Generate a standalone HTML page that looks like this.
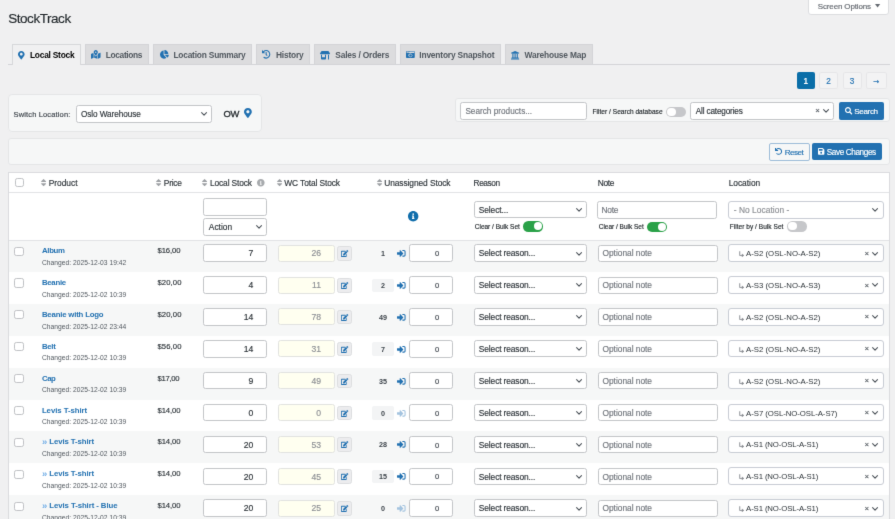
<!DOCTYPE html>
<html lang="en"><head><meta charset="utf-8"><title>StockTrack</title><style>
html,body{margin:0;padding:0;background:#f0f0f1;}
#p{will-change:transform;filter:url(#soft);position:relative;width:895px;height:519px;overflow:hidden;font-family:"Liberation Sans", Arial, sans-serif;}
#p .b{position:absolute;box-sizing:border-box;}
#p .t{position:absolute;white-space:nowrap;}
#p .n{-webkit-text-stroke:0.15px currentColor;}
#p .i{position:absolute;overflow:visible;}
</style></head><body><svg width="0" height="0" style="position:absolute"><filter id="soft" x="0" y="0" width="100%" height="100%" color-interpolation-filters="sRGB"><feConvolveMatrix order="3" kernelMatrix="1 9 1 9 81 9 1 9 1" edgeMode="duplicate" preserveAlpha="false"/></filter></svg><div id="p">
<span class="t n" style="top:12.00px;font-size:13.5px;line-height:13.5px;color:#1d2327;font-weight:400;letter-spacing:-0.447px;left:8.20px;">StockTrack</span>
<div class="b" style="left:808.40px;top:-1.00px;width:80.80px;height:16.30px;background:#fff;border:1px solid #dcdde0;border-radius:0 0 3px 3px;"></div>
<span class="t n" style="top:3.00px;font-size:8px;line-height:8px;color:#646970;font-weight:400;letter-spacing:-0.150px;left:817.80px;">Screen Options</span>
<svg class="i" style="left:875.00px;top:4.30px" width="5.20" height="3.60" viewBox="0 0 10 7" preserveAspectRatio="none" ><path fill="#646970" d="M0 0h10L5 7z"/></svg>
<div class="b" style="left:8.00px;top:64.00px;width:882.00px;height:1.00px;background:#d3d4d7;"></div>
<div class="b" style="left:12.25px;top:44.00px;width:68.35px;height:21.00px;background:#f0f0f1;border:1px solid #d6d7da;border-bottom:none;"></div>
<svg class="i" style="left:18.40px;top:50.75px" width="6.60" height="8.40" viewBox="0 0 384 512" preserveAspectRatio="none" ><path fill="#2271b1" d="M172.268 501.670C26.970 291.031 0 269.413 0 192 0 85.961 85.961 0 192 0s192 85.961 192 192c0 77.413-26.970 99.031-172.268 309.670-9.535 13.774-29.930 13.773-39.464 0zM192 272c44.183 0 80-35.817 80-80s-35.817-80-80-80-80 35.817-80 80 35.817 80 80 80z"/></svg>
<span class="t" style="top:51.00px;font-size:8.4px;line-height:8.4px;color:#000;font-weight:700;letter-spacing:-0.242px;left:30.00px;">Local Stock</span>
<div class="b" style="left:84.50px;top:44.00px;width:64.50px;height:20.00px;background:#dcdcde;border:1px solid #d3d4d7;border-bottom:none;"></div>
<svg class="i" style="left:90.75px;top:49.90px" width="9.55" height="8.80" viewBox="0 0 576 512" preserveAspectRatio="none" ><path fill="#2271b1" d="M288 0c-69.590 0-126 56.410-126 126 0 56.260 82.350 158.800 113.900 196.020 6.390 7.540 17.820 7.540 24.200 0C331.650 284.800 414 182.260 414 126 414 56.410 357.590 0 288 0zm0 168c-23.200 0-42-18.800-42-42s18.800-42 42-42 42 18.800 42 42-18.800 42-42 42zM20.120 215.950A32.006 32.006 0 0 0 0 245.660v250.320c0 11.320 11.430 19.060 21.940 14.860L160 448V214.920c-8.840-15.980-16.070-31.540-21.250-46.420L20.120 215.950zM288 359.670c-14.070 0-27.380-6.180-36.510-16.960-19.660-23.200-40.570-49.620-59.490-76.720v182l192 64V266c-18.920 27.090-39.820 53.520-59.490 76.720-9.130 10.770-22.440 16.950-36.510 16.950zm266.060-198.510L416 224v288l139.880-55.950A31.996 31.996 0 0 0 576 426.340V176.020c0-11.320-11.430-19.060-21.940-14.860z"/></svg>
<span class="t" style="top:51.00px;font-size:8.4px;line-height:8.4px;color:#50575e;font-weight:700;letter-spacing:-0.351px;left:105.75px;">Locations</span>
<div class="b" style="left:153.00px;top:44.00px;width:98.75px;height:20.00px;background:#dcdcde;border:1px solid #d3d4d7;border-bottom:none;"></div>
<svg class="i" style="left:159.50px;top:50.25px" width="8.80" height="8.65" viewBox="0 0 544 512" preserveAspectRatio="none" ><path fill="#2271b1" d="M527.79 288H290.5l158.03 158.03c6.040 6.040 15.980 6.530 22.190.680 38.700-36.460 65.320-85.610 73.130-140.860 1.340-9.460-6.510-17.850-16.060-17.850zm-15.830-64.800C503.720 103.740 408.260 8.280 288.800.040 279.680-.590 272 7.100 272 16.240V240h223.770c9.140 0 16.820-7.680 16.190-16.800zM224 288V50.710c0-9.550-8.390-17.400-17.840-16.060C86.990 51.490-4.100 155.600.140 280.370 4.500 408.510 114.830 513.590 243.030 511.980c50.400-.630 96.970-16.870 135.260-44.030 7.900-5.600 8.420-17.230 1.570-24.080L224 288z"/></svg>
<span class="t" style="top:51.00px;font-size:8.4px;line-height:8.4px;color:#50575e;font-weight:700;letter-spacing:-0.207px;left:173.40px;">Location Summary</span>
<div class="b" style="left:256.10px;top:44.00px;width:53.65px;height:20.00px;background:#dcdcde;border:1px solid #d3d4d7;border-bottom:none;"></div>
<svg class="i" style="left:261.80px;top:50.20px" width="8.30" height="8.70" viewBox="8 8 496 496" preserveAspectRatio="none" ><path fill="#2271b1" d="M504 255.531c.253 136.640-111.180 248.372-247.820 248.468-59.015.042-113.223-20.530-155.822-54.911-11.077-8.940-11.905-25.541-1.839-35.607l11.267-11.267c8.609-8.609 22.353-9.551 31.891-1.984C173.062 425.135 212.781 440 256 440c101.705 0 184-82.311 184-184 0-101.705-82.311-184-184-184-48.814 0-93.149 18.969-126.068 49.932l50.754 50.754c10.080 10.080 2.941 27.314-11.313 27.314H24c-8.837 0-16-7.163-16-16V38.627c0-14.254 17.234-21.393 27.314-11.314l49.372 49.372C129.209 34.136 189.552 8 256 8c136.810 0 247.747 110.780 248 247.531zm-180.912 78.784l9.823-12.630c8.138-10.463 6.253-25.542-4.210-33.679L288 256.349V152c0-13.255-10.745-24-24-24h-16c-13.255 0-24 10.745-24 24v135.651l65.409 50.874c10.463 8.137 25.541 6.253 33.679-4.210z"/></svg>
<span class="t" style="top:51.00px;font-size:8.4px;line-height:8.4px;color:#50575e;font-weight:700;letter-spacing:-0.162px;left:275.90px;">History</span>
<div class="b" style="left:313.75px;top:44.00px;width:81.75px;height:20.00px;background:#dcdcde;border:1px solid #d3d4d7;border-bottom:none;"></div>
<svg class="i" style="left:319.90px;top:50.50px" width="10.00" height="8.40" viewBox="0 0 640 512" preserveAspectRatio="none" ><path fill="#2271b1" d="M320 384H128V224H64v256c0 17.700 14.300 32 32 32h256c17.700 0 32-14.300 32-32V224h-64v160zm314.600-241.800l-85.300-128c-6-8.900-16-14.200-26.700-14.200H117.400c-10.700 0-20.700 5.300-26.600 14.200l-85.300 128c-14.200 21.300 1 49.800 26.600 49.800H608c25.500 0 40.700-28.500 26.600-49.800zM512 496c0 8.800 7.200 16 16 16h32c8.800 0 16-7.200 16-16V224h-64v272z"/></svg>
<span class="t" style="top:51.00px;font-size:8.4px;line-height:8.4px;color:#50575e;font-weight:700;letter-spacing:-0.179px;left:335.30px;">Sales / Orders</span>
<div class="b" style="left:399.50px;top:44.00px;width:101.25px;height:20.00px;background:#dcdcde;border:1px solid #d3d4d7;border-bottom:none;"></div>
<svg class="i" style="left:405.55px;top:51.00px" width="8.75" height="7.10" viewBox="0 32 512 448" preserveAspectRatio="none" ><path fill="#2271b1" d="M48 32C21.500 32 0 53.500 0 80v352c0 26.500 21.500 48 48 48h416c26.500 0 48-21.500 48-48V80c0-26.500-21.500-48-48-48H48zm0 32h106c3.300 0 6 2.700 6 6v20c0 3.300-2.700 6-6 6H38c-3.300 0-6-2.700-6-6V80c0-8.800 7.200-16 16-16zm426 96H38c-3.300 0-6-2.700-6-6v-36c0-3.300 2.700-6 6-6h138l30.200-45.300c1.100-1.700 3-2.700 5-2.700H464c8.800 0 16 7.200 16 16v74c0 3.300-2.700 6-6 6zM256 424c-66.200 0-120-53.800-120-120s53.800-120 120-120 120 53.800 120 120-53.800 120-120 120zm0-208c-48.500 0-88 39.500-88 88s39.500 88 88 88 88-39.500 88-88-39.500-88-88-88zm-48 104c-8.800 0-16-7.200-16-16 0-35.300 28.700-64 64-64 8.800 0 16 7.200 16 16s-7.200 16-16 16c-17.600 0-32 14.400-32 32 0 8.800-7.200 16-16 16z"/></svg>
<span class="t" style="top:51.00px;font-size:8.4px;line-height:8.4px;color:#50575e;font-weight:700;letter-spacing:-0.176px;left:419.30px;">Inventory Snapshot</span>
<div class="b" style="left:505.00px;top:44.00px;width:87.50px;height:20.00px;background:#dcdcde;border:1px solid #d3d4d7;border-bottom:none;"></div>
<svg class="i" style="left:510.90px;top:50.50px" width="8.20" height="8.40" viewBox="16 32 480 448" preserveAspectRatio="none" ><path fill="#2271b1" d="M496 128v16a8 8 0 0 1-8 8h-24v12c0 6.627-5.373 12-12 12H60c-6.627 0-12-5.373-12-12v-12H24a8 8 0 0 1-8-8v-16a8 8 0 0 1 4.941-7.392l232-88a7.996 7.996 0 0 1 6.118 0l232 88A8 8 0 0 1 496 128zm-24 304H40c-13.255 0-24 10.745-24 24v16a8 8 0 0 0 8 8h464a8 8 0 0 0 8-8v-16c0-13.255-10.745-24-24-24zM96 192v192H60c-6.627 0-12 5.373-12 12v20h416v-20c0-6.627-5.373-12-12-12h-36V192h-64v192h-64V192h-64v192h-64V192H96z"/></svg>
<span class="t" style="top:51.00px;font-size:8.4px;line-height:8.4px;color:#50575e;font-weight:700;letter-spacing:-0.185px;left:524.60px;">Warehouse Map</span>
<div class="b" style="left:796.75px;top:72.10px;width:18.25px;height:16.70px;background:#0a6ea8;border-radius:2px;"></div>
<span class="t" style="top:78.00px;font-size:8.2px;line-height:8.2px;color:#fff;font-weight:700;left:805.88px;transform:translateX(-50%);">1</span>
<div class="b" style="left:819.25px;top:72.10px;width:18.75px;height:16.70px;background:#f3f3f4;border:1px solid #e6e6e8;border-radius:2px;"></div>
<span class="t n" style="top:78.00px;font-size:8.2px;line-height:8.2px;color:#2271b1;font-weight:400;left:828.62px;transform:translateX(-50%);">2</span>
<div class="b" style="left:842.50px;top:72.10px;width:19.00px;height:16.70px;background:#f3f3f4;border:1px solid #e6e6e8;border-radius:2px;"></div>
<span class="t n" style="top:78.00px;font-size:8.2px;line-height:8.2px;color:#2271b1;font-weight:400;left:852.00px;transform:translateX(-50%);">3</span>
<div class="b" style="left:866.00px;top:72.10px;width:20.50px;height:16.70px;background:#f3f3f4;border:1px solid #e6e6e8;border-radius:2px;"></div>
<span class="t" style="top:78.00px;font-size:7.5px;line-height:7.5px;color:#2271b1;font-weight:700;left:876.25px;transform:translateX(-50%);font-family:&quot;DejaVu Sans&quot;,sans-serif;">→</span>
<div class="b" style="left:8.00px;top:94.40px;width:254.40px;height:38.10px;background:#f6f7f7;border:1px solid #e4e5e7;border-radius:4px;"></div>
<span class="t n" style="top:111.00px;font-size:7.5px;line-height:7.5px;color:#3c434a;font-weight:400;letter-spacing:0.145px;left:13.50px;">Switch Location:</span>
<div class="b" style="left:76.00px;top:105.25px;width:136.30px;height:17.40px;background:#fff;border:1px solid #c3c5c8;border-radius:2.5px;"></div>
<span class="t n" style="top:111.00px;font-size:8.2px;line-height:8.2px;color:#2c3338;font-weight:400;letter-spacing:-0.052px;left:80.90px;">Oslo Warehouse</span>
<svg class="i" style="left:201.30px;top:112.10px" width="6.10" height="3.80" viewBox="0 0 12 7" preserveAspectRatio="none" ><path fill="none" stroke="#454c53" stroke-width="2.05" stroke-linecap="round" stroke-linejoin="round" d="M1.200 1.200 6 5.800l4.800-4.600"/></svg>
<span class="t n" style="top:109.00px;font-size:9.4px;line-height:9.4px;color:#1d2327;font-weight:400;letter-spacing:-0.446px;left:223.60px;-webkit-text-stroke:0.3px #1d2327;">OW</span>
<svg class="i" style="left:244.30px;top:108.10px" width="7.80" height="10.00" viewBox="0 0 384 512" preserveAspectRatio="none" ><path fill="#2271b1" d="M172.268 501.670C26.970 291.031 0 269.413 0 192 0 85.961 85.961 0 192 0s192 85.961 192 192c0 77.413-26.970 99.031-172.268 309.670-9.535 13.774-29.930 13.773-39.464 0zM192 272c44.183 0 80-35.817 80-80s-35.817-80-80-80-80 35.817-80 80 35.817 80 80 80z"/></svg>
<div class="b" style="left:455.40px;top:98.40px;width:434.60px;height:24.10px;background:#f6f7f7;border:1px solid #e4e5e7;border-radius:3px;"></div>
<div class="b" style="left:460.30px;top:102.00px;width:126.30px;height:17.80px;background:#fff;border:1px solid #c3c5c8;border-radius:2.5px;"></div>
<span class="t n" style="top:108.00px;font-size:8.2px;line-height:8.2px;color:#70757c;font-weight:400;letter-spacing:0.015px;left:465.40px;">Search products...</span>
<span class="t n" style="top:109.00px;font-size:6.5px;line-height:6.5px;color:#1d2327;font-weight:400;letter-spacing:0.043px;left:592.50px;">Filter / Search database</span>
<div class="b" style="left:666.30px;top:106.50px;width:19.80px;height:10.50px;background:#c6c7ca;border-radius:5.25px;"><div style="position:absolute;left:1.10px;top:1.1px;width:8.30px;height:8.30px;border-radius:50%;background:#fff"></div></div>
<div class="b" style="left:690.40px;top:102.00px;width:143.70px;height:17.80px;background:#fff;border:1px solid #c3c5c8;border-radius:2.5px;"></div>
<span class="t n" style="top:108.00px;font-size:8.2px;line-height:8.2px;color:#2c3338;font-weight:400;letter-spacing:-0.166px;left:695.80px;">All categories</span>
<span class="t n" style="top:107.00px;font-size:7.8px;line-height:7.8px;color:#50575e;font-weight:400;left:815.30px;">×</span>
<svg class="i" style="left:823.10px;top:109.10px" width="6.10" height="3.80" viewBox="0 0 12 7" preserveAspectRatio="none" ><path fill="none" stroke="#454c53" stroke-width="2.05" stroke-linecap="round" stroke-linejoin="round" d="M1.200 1.200 6 5.800l4.800-4.600"/></svg>
<div class="b" style="left:838.70px;top:102.00px;width:45.80px;height:17.80px;background:#2271b1;border-radius:2px;"></div>
<svg class="i" style="left:844.70px;top:107.10px" width="7.30" height="7.50" viewBox="0 0 512 512" preserveAspectRatio="none" ><path fill="#fff" d="M505 442.700L405.300 343c-4.500-4.500-10.600-7-17-7H372c27.600-35.300 44-79.700 44-128C416 93.100 322.900 0 208 0S0 93.100 0 208s93.100 208 208 208c48.300 0 92.700-16.400 128-44v16.300c0 6.400 2.500 12.500 7 17l99.700 99.700c9.400 9.400 24.600 9.400 33.900 0l28.300-28.300c9.400-9.400 9.400-24.600.1-34zM208 336c-70.700 0-128-57.200-128-128 0-70.700 57.200-128 128-128 70.700 0 128 57.200 128 128 0 70.700-57.200 128-128 128z"/></svg>
<span class="t n" style="top:108.00px;font-size:8.1px;line-height:8.1px;color:#fff;font-weight:400;letter-spacing:-0.371px;left:854.30px;">Search</span>
<div class="b" style="left:8.00px;top:138.30px;width:882.00px;height:26.40px;background:#f6f7f7;border:1px solid #e4e5e7;border-radius:3px;"></div>
<div class="b" style="left:768.60px;top:143.00px;width:41.10px;height:17.60px;background:#f6f7f7;border:1px solid #9dbcd9;border-radius:2px;"></div>
<svg class="i" style="left:774.60px;top:148.40px" width="7.10" height="6.70" viewBox="0 0 505 504" preserveAspectRatio="none" ><path fill="#2271b1" d="M212.333 224.333H12c-6.627 0-12-5.373-12-12V12C0 5.373 5.373 0 12 0h48c6.627 0 12 5.373 12 12v78.112C117.773 39.279 184.260 7.470 258.175 8.007c136.906.994 246.448 111.623 246.157 248.532C504.041 393.258 393.120 504 256.333 504c-64.089 0-122.496-24.313-166.510-64.215-5.099-4.622-5.334-12.554-.467-17.420l33.967-33.967c4.474-4.474 11.662-4.717 16.401-.525C170.760 415.336 211.580 432 256.333 432c97.268 0 176-78.716 176-176 0-97.267-78.716-176-176-176-58.496 0-110.280 28.476-142.274 72.333h98.274c6.627 0 12 5.373 12 12v48c0 6.627-5.373 12-12 12z"/></svg>
<span class="t n" style="top:149.00px;font-size:8.1px;line-height:8.1px;color:#2271b1;font-weight:400;letter-spacing:-0.514px;left:784.70px;">Reset</span>
<div class="b" style="left:812.00px;top:143.00px;width:70.00px;height:17.40px;background:#2271b1;border-radius:2px;"></div>
<svg class="i" style="left:818.10px;top:148.40px" width="6.40" height="6.70" viewBox="0 32 448 448" preserveAspectRatio="none" ><path fill="#fff" d="M433.941 129.941l-83.882-83.882A48 48 0 0 0 316.118 32H48C21.490 32 0 53.490 0 80v352c0 26.510 21.490 48 48 48h352c26.510 0 48-21.490 48-48V163.882a48 48 0 0 0-14.059-33.941zM224 416c-35.346 0-64-28.654-64-64 0-35.346 28.654-64 64-64s64 28.654 64 64c0 35.346-28.654 64-64 64zm96-304.520V212c0 6.627-5.373 12-12 12H76c-6.627 0-12-5.373-12-12V108c0-6.627 5.373-12 12-12h228.520c3.183 0 6.235 1.264 8.485 3.515l3.480 3.480A11.996 11.996 0 0 1 320 111.480z"/></svg>
<span class="t n" style="top:149.00px;font-size:8.2px;line-height:8.2px;color:#fff;font-weight:400;letter-spacing:-0.384px;left:826.70px;">Save Changes</span>
<div class="b" style="left:8.00px;top:172.20px;width:882.00px;height:360.00px;background:#fff;border:1px solid #dadbde;"></div>
<div class="b" style="left:9.00px;top:192.40px;width:880.00px;height:1.00px;background:#e2e3e5;"></div>
<div class="b" style="left:9.00px;top:240.00px;width:880.00px;height:1.00px;background:#e2e3e5;"></div>
<div class="b" style="left:14.80px;top:178.10px;width:9.60px;height:9.20px;background:#fff;border:1px solid #c0c2c5;border-radius:2.3px;"></div>
<svg class="i" style="left:41.10px;top:178.90px" width="5.20" height="7.20" viewBox="10 57 300 398" preserveAspectRatio="none" ><path fill="#9da0a4" d="M41 288h238c21.400 0 32.100 25.900 17 41L177 448c-9.400 9.400-24.600 9.400-33.900 0L24 329c-15.100-15.100-4.400-41 17-41zm255-105L177 64c-9.400-9.400-24.600-9.400-33.900 0L24 183c-15.100 15.100-4.400 41 17 41h238c21.400 0 32.100-25.900 17-41z"/></svg>
<span class="t n" style="top:179.00px;font-size:8.4px;line-height:8.4px;color:#2c3338;font-weight:400;letter-spacing:-0.029px;left:48.80px;">Product</span>
<svg class="i" style="left:156.30px;top:178.90px" width="5.20" height="7.20" viewBox="10 57 300 398" preserveAspectRatio="none" ><path fill="#9da0a4" d="M41 288h238c21.400 0 32.100 25.900 17 41L177 448c-9.400 9.400-24.600 9.400-33.900 0L24 329c-15.100-15.100-4.400-41 17-41zm255-105L177 64c-9.400-9.400-24.600-9.400-33.900 0L24 183c-15.100 15.100-4.400 41 17 41h238c21.400 0 32.100-25.900 17-41z"/></svg>
<span class="t n" style="top:179.00px;font-size:8.4px;line-height:8.4px;color:#2c3338;font-weight:400;letter-spacing:-0.209px;left:163.75px;">Price</span>
<svg class="i" style="left:202.00px;top:178.90px" width="5.20" height="7.20" viewBox="10 57 300 398" preserveAspectRatio="none" ><path fill="#9da0a4" d="M41 288h238c21.400 0 32.100 25.900 17 41L177 448c-9.400 9.400-24.600 9.400-33.900 0L24 329c-15.100-15.100-4.400-41 17-41zm255-105L177 64c-9.400-9.400-24.600-9.400-33.900 0L24 183c-15.100 15.100-4.400 41 17 41h238c21.400 0 32.100-25.900 17-41z"/></svg>
<span class="t n" style="top:179.00px;font-size:8.4px;line-height:8.4px;color:#2c3338;font-weight:400;letter-spacing:-0.130px;left:210.00px;">Local Stock</span>
<svg class="i" style="left:256.95px;top:178.90px" width="7.60" height="7.60" viewBox="8 8 496 496" preserveAspectRatio="none" ><path fill="#a7aaad" d="M256 8C119.043 8 8 119.083 8 256c0 136.997 111.043 248 248 248s248-111.003 248-248C504 119.083 392.957 8 256 8zm0 110c23.196 0 42 18.804 42 42s-18.804 42-42 42-42-18.804-42-42 18.804-42 42-42zm56 254c0 6.627-5.373 12-12 12h-88c-6.627 0-12-5.373-12-12v-24c0-6.627 5.373-12 12-12h12v-64h-12c-6.627 0-12-5.373-12-12v-24c0-6.627 5.373-12 12-12h64c6.627 0 12 5.373 12 12v100h12c6.627 0 12 5.373 12 12v24z"/></svg>
<svg class="i" style="left:277.00px;top:178.90px" width="5.20" height="7.20" viewBox="10 57 300 398" preserveAspectRatio="none" ><path fill="#9da0a4" d="M41 288h238c21.400 0 32.100 25.900 17 41L177 448c-9.400 9.400-24.600 9.400-33.900 0L24 329c-15.100-15.100-4.400-41 17-41zm255-105L177 64c-9.400-9.400-24.600-9.400-33.900 0L24 183c-15.100 15.100-4.400 41 17 41h238c21.400 0 32.100-25.900 17-41z"/></svg>
<span class="t n" style="top:179.00px;font-size:8.4px;line-height:8.4px;color:#2c3338;font-weight:400;letter-spacing:-0.104px;left:284.25px;">WC Total Stock</span>
<svg class="i" style="left:376.75px;top:178.90px" width="5.20" height="7.20" viewBox="10 57 300 398" preserveAspectRatio="none" ><path fill="#9da0a4" d="M41 288h238c21.400 0 32.100 25.900 17 41L177 448c-9.400 9.400-24.600 9.400-33.900 0L24 329c-15.100-15.100-4.400-41 17-41zm255-105L177 64c-9.400-9.400-24.600-9.400-33.900 0L24 183c-15.100 15.100-4.400 41 17 41h238c21.400 0 32.100-25.900 17-41z"/></svg>
<span class="t n" style="top:179.00px;font-size:8.4px;line-height:8.4px;color:#2c3338;font-weight:400;letter-spacing:-0.084px;left:384.25px;">Unassigned Stock</span>
<span class="t n" style="top:179.00px;font-size:8.3px;line-height:8.3px;color:#2c3338;font-weight:400;letter-spacing:-0.422px;left:473.60px;">Reason</span>
<span class="t n" style="top:179.00px;font-size:8.4px;line-height:8.4px;color:#2c3338;font-weight:400;letter-spacing:-0.301px;left:597.70px;">Note</span>
<span class="t n" style="top:179.00px;font-size:8.4px;line-height:8.4px;color:#2c3338;font-weight:400;letter-spacing:-0.024px;left:728.70px;">Location</span>
<div class="b" style="left:203.20px;top:198.25px;width:63.40px;height:17.30px;background:#fff;border:1px solid #c3c5c8;border-radius:2.5px;"></div>
<div class="b" style="left:203.20px;top:218.35px;width:63.40px;height:17.30px;background:#fff;border:1px solid #c3c5c8;border-radius:2.5px;"></div>
<span class="t n" style="top:223.00px;font-size:8.4px;line-height:8.4px;color:#2c3338;font-weight:400;letter-spacing:-0.017px;left:208.85px;">Action</span>
<svg class="i" style="left:256.10px;top:225.30px" width="6.10" height="3.80" viewBox="0 0 12 7" preserveAspectRatio="none" ><path fill="none" stroke="#454c53" stroke-width="2.05" stroke-linecap="round" stroke-linejoin="round" d="M1.200 1.200 6 5.800l4.800-4.600"/></svg>
<svg class="i" style="left:407.55px;top:211.10px" width="10.40" height="10.40" viewBox="8 8 496 496" preserveAspectRatio="none" ><circle cx="256" cy="256" r="230" fill="#fff"/><path fill="#0f6dab" d="M256 8C119.043 8 8 119.083 8 256c0 136.997 111.043 248 248 248s248-111.003 248-248C504 119.083 392.957 8 256 8zm0 110c23.196 0 42 18.804 42 42s-18.804 42-42 42-42-18.804-42-42 18.804-42 42-42zm56 254c0 6.627-5.373 12-12 12h-88c-6.627 0-12-5.373-12-12v-24c0-6.627 5.373-12 12-12h12v-64h-12c-6.627 0-12-5.373-12-12v-24c0-6.627 5.373-12 12-12h64c6.627 0 12 5.373 12 12v100h12c6.627 0 12 5.373 12 12v24z"/></svg>
<div class="b" style="left:473.90px;top:201.25px;width:112.70px;height:17.20px;background:#fff;border:1px solid #c3c5c8;border-radius:2.5px;"></div>
<span class="t n" style="top:206.00px;font-size:8.4px;line-height:8.4px;color:#2c3338;font-weight:400;letter-spacing:-0.096px;left:478.75px;">Select...</span>
<svg class="i" style="left:575.50px;top:208.20px" width="6.10" height="3.80" viewBox="0 0 12 7" preserveAspectRatio="none" ><path fill="none" stroke="#454c53" stroke-width="2.05" stroke-linecap="round" stroke-linejoin="round" d="M1.200 1.200 6 5.800l4.800-4.600"/></svg>
<span class="t n" style="top:224.00px;font-size:6.5px;line-height:6.5px;color:#1d2327;font-weight:400;letter-spacing:-0.011px;left:474.80px;">Clear / Bulk Set</span>
<div class="b" style="left:523.30px;top:221.05px;width:19.80px;height:10.50px;background:#2aa148;border-radius:5.25px;"><div style="position:absolute;left:10.40px;top:1.1px;width:8.30px;height:8.30px;border-radius:50%;background:#fff"></div></div>
<div class="b" style="left:597.00px;top:201.40px;width:120.20px;height:17.20px;background:#fff;border:1px solid #c3c5c8;border-radius:2.5px;"></div>
<span class="t n" style="top:206.00px;font-size:8.4px;line-height:8.4px;color:#70757c;font-weight:400;letter-spacing:-0.301px;left:601.60px;">Note</span>
<span class="t n" style="top:224.00px;font-size:6.5px;line-height:6.5px;color:#1d2327;font-weight:400;letter-spacing:-0.011px;left:598.75px;">Clear / Bulk Set</span>
<div class="b" style="left:647.40px;top:221.50px;width:19.80px;height:10.50px;background:#2aa148;border-radius:5.25px;"><div style="position:absolute;left:10.40px;top:1.1px;width:8.30px;height:8.30px;border-radius:50%;background:#fff"></div></div>
<div class="b" style="left:728.10px;top:201.20px;width:155.60px;height:17.50px;background:#fff;border:1px solid #c8ccd4;border-radius:3px;"></div>
<span class="t n" style="top:206.00px;font-size:8.4px;line-height:8.4px;color:#8c8f94;font-weight:400;letter-spacing:0.054px;left:733.70px;">- No Location -</span>
<svg class="i" style="left:872.00px;top:208.40px" width="6.10" height="3.80" viewBox="0 0 12 7" preserveAspectRatio="none" ><path fill="none" stroke="#454c53" stroke-width="2.05" stroke-linecap="round" stroke-linejoin="round" d="M1.200 1.200 6 5.800l4.800-4.600"/></svg>
<span class="t n" style="top:224.00px;font-size:6.5px;line-height:6.5px;color:#1d2327;font-weight:400;letter-spacing:0.050px;left:729.70px;">Filter by / Bulk Set</span>
<div class="b" style="left:787.40px;top:221.10px;width:19.80px;height:10.50px;background:#c6c7ca;border-radius:5.25px;"><div style="position:absolute;left:1.10px;top:1.1px;width:8.30px;height:8.30px;border-radius:50%;background:#fff"></div></div>
<div class="b" style="left:9.00px;top:241.00px;width:880.00px;height:31.08px;background:#f6f7f7;"></div>
<div class="b" style="left:14.20px;top:246.50px;width:10.00px;height:9.20px;background:#fff;border:1px solid #c0c2c5;border-radius:2.3px;"></div>
<span class="t" style="top:247.00px;font-size:7.8px;line-height:7.8px;color:#2271b1;font-weight:700;letter-spacing:-0.280px;left:41.90px;">Album</span>
<span class="t" style="top:260.00px;font-size:6.7px;line-height:6.7px;color:#50575e;font-weight:400;letter-spacing:0.030px;left:41.90px;">Changed: 2025-12-03 19:42</span>
<span class="t n" style="top:247.00px;font-size:7.7px;line-height:7.7px;color:#2c3338;font-weight:400;letter-spacing:-0.105px;left:157.50px;">$16,00</span>
<div class="b" style="left:203.20px;top:244.40px;width:63.50px;height:17.50px;background:#fff;border:1px solid #c3c5c8;border-radius:2.5px;"></div>
<span class="t n" style="top:249.00px;font-size:8.6px;line-height:8.6px;color:#2c3338;font-weight:400;right:641.80px;">7</span>
<div class="b" style="left:278.20px;top:244.70px;width:56.40px;height:17.00px;background:#fffff0;border:1px solid #e2e3e0;border-radius:2.5px;"></div>
<span class="t n" style="top:249.00px;font-size:8.6px;line-height:8.6px;color:#8c8f94;font-weight:400;right:574.00px;">26</span>
<div class="b" style="left:337.30px;top:246.10px;width:14.80px;height:14.60px;background:#ececee;border:1px solid #dddee0;border-radius:2.5px;"></div>
<svg class="i" style="left:341.00px;top:250.10px" width="7.30" height="6.90" viewBox="0 0 576 512" preserveAspectRatio="none" ><path fill="#2271b1" d="M402.600 83.200l90.200 90.200c3.800 3.800 3.800 10 0 13.800L274.400 405.600l-92.800 10.300c-12.400 1.400-22.900-9.100-21.500-21.500l10.300-92.800L388.800 83.200c3.800-3.800 10-3.800 13.800 0zm162-22.900l-48.800-48.800c-15.200-15.200-39.900-15.200-55.200 0l-35.400 35.400c-3.800 3.800-3.800 10 0 13.800l90.200 90.200c3.800 3.800 10 3.800 13.800 0l35.400-35.400c15.200-15.300 15.200-40 0-55.200zM384 346.200V448H64V128h229.800c3.200 0 6.200-1.300 8.500-3.500l40-40c7.600-7.600 2.200-20.500-8.500-20.500H48C21.500 64 0 85.500 0 112v352c0 26.500 21.500 48 48 48h352c26.500 0 48-21.500 48-48V306.200c0-10.700-12.900-16-20.500-8.500l-40 40c-2.200 2.300-3.500 5.300-3.500 8.500z"/></svg>
<span class="t" style="top:250.00px;font-size:7.2px;line-height:7.2px;color:#3c434a;font-weight:700;left:383.05px;transform:translateX(-50%);">1</span>
<svg class="i" style="left:397.30px;top:250.15px" width="8.60" height="6.70" viewBox="0 64 512 384" preserveAspectRatio="none" ><path fill="#2271b1" d="M416 448h-84c-6.600 0-12-5.400-12-12v-40c0-6.600 5.400-12 12-12h84c17.700 0 32-14.300 32-32V160c0-17.700-14.300-32-32-32h-84c-6.600 0-12-5.400-12-12V76c0-6.600 5.400-12 12-12h84c53 0 96 43 96 96v192c0 53-43 96-96 96zm-47-201L201 79c-15-15-41-4.500-41 17v96H24c-13.300 0-24 10.700-24 24v96c0 13.300 10.700 24 24 24h136v96c0 21.500 26 32 41 17l168-168c9.300-9.400 9.300-24.600 0-34z"/></svg>
<div class="b" style="left:409.20px;top:244.40px;width:43.50px;height:17.50px;background:#fff;border:1px solid #c3c5c8;border-radius:2.5px;"></div>
<span class="t n" style="top:250.00px;font-size:7.6px;line-height:7.6px;color:#3c434a;font-weight:400;right:455.90px;">0</span>
<div class="b" style="left:474.00px;top:244.40px;width:112.60px;height:17.40px;background:#fff;border:1px solid #c3c5c8;border-radius:2.5px;"></div>
<span class="t n" style="top:249.00px;font-size:8.4px;line-height:8.4px;color:#2c3338;font-weight:400;letter-spacing:-0.120px;left:478.85px;">Select reason...</span>
<svg class="i" style="left:575.50px;top:251.50px" width="6.10" height="3.80" viewBox="0 0 12 7" preserveAspectRatio="none" ><path fill="none" stroke="#454c53" stroke-width="2.05" stroke-linecap="round" stroke-linejoin="round" d="M1.200 1.200 6 5.800l4.800-4.600"/></svg>
<div class="b" style="left:597.90px;top:244.70px;width:119.90px;height:17.10px;background:#fff;border:1px solid #c3c5c8;border-radius:2.5px;"></div>
<span class="t n" style="top:249.00px;font-size:8.4px;line-height:8.4px;color:#70757c;font-weight:400;letter-spacing:-0.028px;left:602.50px;">Optional note</span>
<div class="b" style="left:728.20px;top:244.30px;width:155.50px;height:17.50px;background:#fff;border:1px solid #c8ccd4;border-radius:3px;"></div>
<span class="t n" style="top:251.00px;font-size:8px;line-height:8px;color:#7b7f85;font-weight:400;left:736.60px;font-family:&quot;DejaVu Sans&quot;,sans-serif;transform:scaleX(1.25);transform-origin:0 0;-webkit-text-stroke:0;">↳</span>
<span class="t n" style="top:250.00px;font-size:7.8px;line-height:7.8px;color:#2c3338;font-weight:400;letter-spacing:-0.013px;left:746.10px;-webkit-text-stroke:0;">A-S2 (OSL-NO-A-S2)</span>
<span class="t n" style="top:250.00px;font-size:7.8px;line-height:7.8px;color:#50575e;font-weight:400;left:864.50px;">×</span>
<svg class="i" style="left:872.00px;top:251.50px" width="6.10" height="3.80" viewBox="0 0 12 7" preserveAspectRatio="none" ><path fill="none" stroke="#454c53" stroke-width="2.05" stroke-linecap="round" stroke-linejoin="round" d="M1.200 1.200 6 5.800l4.800-4.600"/></svg>
<div class="b" style="left:14.20px;top:278.38px;width:10.00px;height:9.20px;background:#fff;border:1px solid #c0c2c5;border-radius:2.3px;"></div>
<span class="t" style="top:279.00px;font-size:7.8px;line-height:7.8px;color:#2271b1;font-weight:700;letter-spacing:-0.266px;left:41.90px;">Beanie</span>
<span class="t" style="top:292.00px;font-size:6.7px;line-height:6.7px;color:#50575e;font-weight:400;letter-spacing:0.030px;left:41.90px;">Changed: 2025-12-02 10:39</span>
<span class="t n" style="top:279.00px;font-size:7.7px;line-height:7.7px;color:#2c3338;font-weight:400;letter-spacing:0.095px;left:157.50px;">$20,00</span>
<div class="b" style="left:203.20px;top:276.28px;width:63.50px;height:17.50px;background:#fff;border:1px solid #c3c5c8;border-radius:2.5px;"></div>
<span class="t n" style="top:281.00px;font-size:8.6px;line-height:8.6px;color:#2c3338;font-weight:400;right:641.80px;">4</span>
<div class="b" style="left:278.20px;top:276.58px;width:56.40px;height:17.00px;background:#fffff0;border:1px solid #e2e3e0;border-radius:2.5px;"></div>
<span class="t n" style="top:281.00px;font-size:8.6px;line-height:8.6px;color:#8c8f94;font-weight:400;right:574.00px;">11</span>
<div class="b" style="left:337.30px;top:277.98px;width:14.80px;height:14.60px;background:#ececee;border:1px solid #dddee0;border-radius:2.5px;"></div>
<svg class="i" style="left:341.00px;top:281.98px" width="7.30" height="6.90" viewBox="0 0 576 512" preserveAspectRatio="none" ><path fill="#2271b1" d="M402.600 83.200l90.200 90.200c3.800 3.800 3.800 10 0 13.800L274.400 405.600l-92.800 10.300c-12.400 1.400-22.900-9.100-21.500-21.500l10.300-92.800L388.800 83.200c3.800-3.800 10-3.800 13.800 0zm162-22.900l-48.800-48.800c-15.200-15.200-39.900-15.200-55.200 0l-35.400 35.400c-3.800 3.800-3.800 10 0 13.800l90.200 90.200c3.800 3.800 10 3.800 13.800 0l35.400-35.400c15.200-15.300 15.200-40 0-55.200zM384 346.200V448H64V128h229.800c3.200 0 6.200-1.300 8.500-3.500l40-40c7.600-7.600 2.200-20.500-8.500-20.500H48C21.500 64 0 85.500 0 112v352c0 26.500 21.500 48 48 48h352c26.500 0 48-21.500 48-48V306.200c0-10.700-12.900-16-20.500-8.500l-40 40c-2.200 2.300-3.500 5.300-3.500 8.500z"/></svg>
<div class="b" style="left:372.30px;top:278.58px;width:21.50px;height:13.60px;background:#f3f4f5;border-radius:2px;"></div>
<span class="t" style="top:282.00px;font-size:7.2px;line-height:7.2px;color:#3c434a;font-weight:700;left:383.05px;transform:translateX(-50%);">2</span>
<svg class="i" style="left:397.30px;top:282.03px" width="8.60" height="6.70" viewBox="0 64 512 384" preserveAspectRatio="none" ><path fill="#2271b1" d="M416 448h-84c-6.600 0-12-5.400-12-12v-40c0-6.600 5.400-12 12-12h84c17.700 0 32-14.300 32-32V160c0-17.700-14.300-32-32-32h-84c-6.600 0-12-5.400-12-12V76c0-6.600 5.400-12 12-12h84c53 0 96 43 96 96v192c0 53-43 96-96 96zm-47-201L201 79c-15-15-41-4.500-41 17v96H24c-13.300 0-24 10.700-24 24v96c0 13.300 10.700 24 24 24h136v96c0 21.500 26 32 41 17l168-168c9.300-9.400 9.300-24.600 0-34z"/></svg>
<div class="b" style="left:409.20px;top:276.28px;width:43.50px;height:17.50px;background:#fff;border:1px solid #c3c5c8;border-radius:2.5px;"></div>
<span class="t n" style="top:282.00px;font-size:7.6px;line-height:7.6px;color:#3c434a;font-weight:400;right:455.90px;">0</span>
<div class="b" style="left:474.00px;top:276.28px;width:112.60px;height:17.40px;background:#fff;border:1px solid #c3c5c8;border-radius:2.5px;"></div>
<span class="t n" style="top:281.00px;font-size:8.4px;line-height:8.4px;color:#2c3338;font-weight:400;letter-spacing:-0.120px;left:478.85px;">Select reason...</span>
<svg class="i" style="left:575.50px;top:283.38px" width="6.10" height="3.80" viewBox="0 0 12 7" preserveAspectRatio="none" ><path fill="none" stroke="#454c53" stroke-width="2.05" stroke-linecap="round" stroke-linejoin="round" d="M1.200 1.200 6 5.800l4.800-4.600"/></svg>
<div class="b" style="left:597.90px;top:276.58px;width:119.90px;height:17.10px;background:#fff;border:1px solid #c3c5c8;border-radius:2.5px;"></div>
<span class="t n" style="top:281.00px;font-size:8.4px;line-height:8.4px;color:#70757c;font-weight:400;letter-spacing:-0.028px;left:602.50px;">Optional note</span>
<div class="b" style="left:728.20px;top:276.18px;width:155.50px;height:17.50px;background:#fff;border:1px solid #c8ccd4;border-radius:3px;"></div>
<span class="t n" style="top:283.00px;font-size:8px;line-height:8px;color:#7b7f85;font-weight:400;left:736.60px;font-family:&quot;DejaVu Sans&quot;,sans-serif;transform:scaleX(1.25);transform-origin:0 0;-webkit-text-stroke:0;">↳</span>
<span class="t n" style="top:282.00px;font-size:7.8px;line-height:7.8px;color:#2c3338;font-weight:400;letter-spacing:-0.013px;left:746.10px;-webkit-text-stroke:0;">A-S3 (OSL-NO-A-S3)</span>
<span class="t n" style="top:282.00px;font-size:7.8px;line-height:7.8px;color:#50575e;font-weight:400;left:864.50px;">×</span>
<svg class="i" style="left:872.00px;top:283.38px" width="6.10" height="3.80" viewBox="0 0 12 7" preserveAspectRatio="none" ><path fill="none" stroke="#454c53" stroke-width="2.05" stroke-linecap="round" stroke-linejoin="round" d="M1.200 1.200 6 5.800l4.800-4.600"/></svg>
<div class="b" style="left:9.00px;top:303.96px;width:880.00px;height:31.88px;background:#f6f7f7;"></div>
<div class="b" style="left:14.20px;top:310.26px;width:10.00px;height:9.20px;background:#fff;border:1px solid #c0c2c5;border-radius:2.3px;"></div>
<span class="t" style="top:311.00px;font-size:7.8px;line-height:7.8px;color:#2271b1;font-weight:700;letter-spacing:-0.187px;left:41.90px;">Beanie with Logo</span>
<span class="t" style="top:324.00px;font-size:6.7px;line-height:6.7px;color:#50575e;font-weight:400;letter-spacing:0.030px;left:41.90px;">Changed: 2025-12-02 23:44</span>
<span class="t n" style="top:311.00px;font-size:7.7px;line-height:7.7px;color:#2c3338;font-weight:400;letter-spacing:0.095px;left:157.50px;">$20,00</span>
<div class="b" style="left:203.20px;top:308.16px;width:63.50px;height:17.50px;background:#fff;border:1px solid #c3c5c8;border-radius:2.5px;"></div>
<span class="t n" style="top:313.00px;font-size:8.6px;line-height:8.6px;color:#2c3338;font-weight:400;right:641.80px;">14</span>
<div class="b" style="left:278.20px;top:308.46px;width:56.40px;height:17.00px;background:#fffff0;border:1px solid #e2e3e0;border-radius:2.5px;"></div>
<span class="t n" style="top:313.00px;font-size:8.6px;line-height:8.6px;color:#8c8f94;font-weight:400;right:574.00px;">78</span>
<div class="b" style="left:337.30px;top:309.86px;width:14.80px;height:14.60px;background:#ececee;border:1px solid #dddee0;border-radius:2.5px;"></div>
<svg class="i" style="left:341.00px;top:313.86px" width="7.30" height="6.90" viewBox="0 0 576 512" preserveAspectRatio="none" ><path fill="#2271b1" d="M402.600 83.200l90.200 90.200c3.800 3.800 3.800 10 0 13.800L274.400 405.600l-92.800 10.300c-12.400 1.400-22.900-9.100-21.500-21.500l10.300-92.800L388.800 83.200c3.800-3.800 10-3.800 13.800 0zm162-22.900l-48.800-48.800c-15.200-15.200-39.900-15.200-55.200 0l-35.400 35.400c-3.800 3.800-3.800 10 0 13.800l90.200 90.200c3.800 3.800 10 3.800 13.800 0l35.400-35.400c15.200-15.300 15.200-40 0-55.200zM384 346.200V448H64V128h229.800c3.200 0 6.200-1.300 8.500-3.500l40-40c7.600-7.600 2.200-20.500-8.500-20.500H48C21.500 64 0 85.500 0 112v352c0 26.500 21.500 48 48 48h352c26.500 0 48-21.500 48-48V306.200c0-10.700-12.900-16-20.500-8.500l-40 40c-2.200 2.300-3.500 5.300-3.500 8.500z"/></svg>
<span class="t" style="top:314.00px;font-size:7.2px;line-height:7.2px;color:#3c434a;font-weight:700;left:383.05px;transform:translateX(-50%);">49</span>
<svg class="i" style="left:397.30px;top:313.91px" width="8.60" height="6.70" viewBox="0 64 512 384" preserveAspectRatio="none" ><path fill="#2271b1" d="M416 448h-84c-6.600 0-12-5.400-12-12v-40c0-6.600 5.400-12 12-12h84c17.700 0 32-14.300 32-32V160c0-17.700-14.300-32-32-32h-84c-6.600 0-12-5.400-12-12V76c0-6.600 5.400-12 12-12h84c53 0 96 43 96 96v192c0 53-43 96-96 96zm-47-201L201 79c-15-15-41-4.500-41 17v96H24c-13.300 0-24 10.700-24 24v96c0 13.300 10.700 24 24 24h136v96c0 21.500 26 32 41 17l168-168c9.300-9.400 9.300-24.600 0-34z"/></svg>
<div class="b" style="left:409.20px;top:308.16px;width:43.50px;height:17.50px;background:#fff;border:1px solid #c3c5c8;border-radius:2.5px;"></div>
<span class="t n" style="top:314.00px;font-size:7.6px;line-height:7.6px;color:#3c434a;font-weight:400;right:455.90px;">0</span>
<div class="b" style="left:474.00px;top:308.16px;width:112.60px;height:17.40px;background:#fff;border:1px solid #c3c5c8;border-radius:2.5px;"></div>
<span class="t n" style="top:313.00px;font-size:8.4px;line-height:8.4px;color:#2c3338;font-weight:400;letter-spacing:-0.120px;left:478.85px;">Select reason...</span>
<svg class="i" style="left:575.50px;top:315.26px" width="6.10" height="3.80" viewBox="0 0 12 7" preserveAspectRatio="none" ><path fill="none" stroke="#454c53" stroke-width="2.05" stroke-linecap="round" stroke-linejoin="round" d="M1.200 1.200 6 5.800l4.800-4.600"/></svg>
<div class="b" style="left:597.90px;top:308.46px;width:119.90px;height:17.10px;background:#fff;border:1px solid #c3c5c8;border-radius:2.5px;"></div>
<span class="t n" style="top:313.00px;font-size:8.4px;line-height:8.4px;color:#70757c;font-weight:400;letter-spacing:-0.028px;left:602.50px;">Optional note</span>
<div class="b" style="left:728.20px;top:308.06px;width:155.50px;height:17.50px;background:#fff;border:1px solid #c8ccd4;border-radius:3px;"></div>
<span class="t n" style="top:315.00px;font-size:8px;line-height:8px;color:#7b7f85;font-weight:400;left:736.60px;font-family:&quot;DejaVu Sans&quot;,sans-serif;transform:scaleX(1.25);transform-origin:0 0;-webkit-text-stroke:0;">↳</span>
<span class="t n" style="top:314.00px;font-size:7.8px;line-height:7.8px;color:#2c3338;font-weight:400;letter-spacing:-0.013px;left:746.10px;-webkit-text-stroke:0;">A-S2 (OSL-NO-A-S2)</span>
<span class="t n" style="top:313.00px;font-size:7.8px;line-height:7.8px;color:#50575e;font-weight:400;left:864.50px;">×</span>
<svg class="i" style="left:872.00px;top:315.26px" width="6.10" height="3.80" viewBox="0 0 12 7" preserveAspectRatio="none" ><path fill="none" stroke="#454c53" stroke-width="2.05" stroke-linecap="round" stroke-linejoin="round" d="M1.200 1.200 6 5.800l4.800-4.600"/></svg>
<div class="b" style="left:14.20px;top:342.14px;width:10.00px;height:9.20px;background:#fff;border:1px solid #c0c2c5;border-radius:2.3px;"></div>
<span class="t" style="top:343.00px;font-size:7.8px;line-height:7.8px;color:#2271b1;font-weight:700;letter-spacing:-0.243px;left:41.90px;">Belt</span>
<span class="t" style="top:355.00px;font-size:6.7px;line-height:6.7px;color:#50575e;font-weight:400;letter-spacing:0.030px;left:41.90px;">Changed: 2025-12-02 10:39</span>
<span class="t n" style="top:343.00px;font-size:7.7px;line-height:7.7px;color:#2c3338;font-weight:400;letter-spacing:0.095px;left:157.50px;">$56,00</span>
<div class="b" style="left:203.20px;top:340.04px;width:63.50px;height:17.50px;background:#fff;border:1px solid #c3c5c8;border-radius:2.5px;"></div>
<span class="t n" style="top:345.00px;font-size:8.6px;line-height:8.6px;color:#2c3338;font-weight:400;right:641.80px;">14</span>
<div class="b" style="left:278.20px;top:340.34px;width:56.40px;height:17.00px;background:#fffff0;border:1px solid #e2e3e0;border-radius:2.5px;"></div>
<span class="t n" style="top:345.00px;font-size:8.6px;line-height:8.6px;color:#8c8f94;font-weight:400;right:574.00px;">31</span>
<div class="b" style="left:337.30px;top:341.74px;width:14.80px;height:14.60px;background:#ececee;border:1px solid #dddee0;border-radius:2.5px;"></div>
<svg class="i" style="left:341.00px;top:345.74px" width="7.30" height="6.90" viewBox="0 0 576 512" preserveAspectRatio="none" ><path fill="#2271b1" d="M402.600 83.200l90.200 90.200c3.800 3.800 3.800 10 0 13.800L274.400 405.600l-92.800 10.300c-12.400 1.400-22.900-9.100-21.500-21.500l10.300-92.800L388.800 83.200c3.800-3.800 10-3.800 13.800 0zm162-22.900l-48.800-48.800c-15.200-15.200-39.900-15.200-55.200 0l-35.400 35.400c-3.800 3.800-3.800 10 0 13.800l90.200 90.200c3.800 3.800 10 3.800 13.800 0l35.400-35.400c15.200-15.300 15.200-40 0-55.200zM384 346.200V448H64V128h229.800c3.200 0 6.200-1.300 8.500-3.500l40-40c7.600-7.600 2.200-20.500-8.500-20.500H48C21.500 64 0 85.500 0 112v352c0 26.500 21.500 48 48 48h352c26.500 0 48-21.500 48-48V306.200c0-10.700-12.900-16-20.500-8.500l-40 40c-2.200 2.300-3.500 5.300-3.500 8.500z"/></svg>
<div class="b" style="left:372.30px;top:342.34px;width:21.50px;height:13.60px;background:#f3f4f5;border-radius:2px;"></div>
<span class="t" style="top:346.00px;font-size:7.2px;line-height:7.2px;color:#3c434a;font-weight:700;left:383.05px;transform:translateX(-50%);">7</span>
<svg class="i" style="left:397.30px;top:345.79px" width="8.60" height="6.70" viewBox="0 64 512 384" preserveAspectRatio="none" ><path fill="#2271b1" d="M416 448h-84c-6.600 0-12-5.400-12-12v-40c0-6.600 5.400-12 12-12h84c17.700 0 32-14.300 32-32V160c0-17.700-14.300-32-32-32h-84c-6.600 0-12-5.400-12-12V76c0-6.600 5.400-12 12-12h84c53 0 96 43 96 96v192c0 53-43 96-96 96zm-47-201L201 79c-15-15-41-4.500-41 17v96H24c-13.300 0-24 10.700-24 24v96c0 13.300 10.700 24 24 24h136v96c0 21.500 26 32 41 17l168-168c9.300-9.400 9.300-24.600 0-34z"/></svg>
<div class="b" style="left:409.20px;top:340.04px;width:43.50px;height:17.50px;background:#fff;border:1px solid #c3c5c8;border-radius:2.5px;"></div>
<span class="t n" style="top:346.00px;font-size:7.6px;line-height:7.6px;color:#3c434a;font-weight:400;right:455.90px;">0</span>
<div class="b" style="left:474.00px;top:340.04px;width:112.60px;height:17.40px;background:#fff;border:1px solid #c3c5c8;border-radius:2.5px;"></div>
<span class="t n" style="top:345.00px;font-size:8.4px;line-height:8.4px;color:#2c3338;font-weight:400;letter-spacing:-0.120px;left:478.85px;">Select reason...</span>
<svg class="i" style="left:575.50px;top:347.14px" width="6.10" height="3.80" viewBox="0 0 12 7" preserveAspectRatio="none" ><path fill="none" stroke="#454c53" stroke-width="2.05" stroke-linecap="round" stroke-linejoin="round" d="M1.200 1.200 6 5.800l4.800-4.600"/></svg>
<div class="b" style="left:597.90px;top:340.34px;width:119.90px;height:17.10px;background:#fff;border:1px solid #c3c5c8;border-radius:2.5px;"></div>
<span class="t n" style="top:345.00px;font-size:8.4px;line-height:8.4px;color:#70757c;font-weight:400;letter-spacing:-0.028px;left:602.50px;">Optional note</span>
<div class="b" style="left:728.20px;top:339.94px;width:155.50px;height:17.50px;background:#fff;border:1px solid #c8ccd4;border-radius:3px;"></div>
<span class="t n" style="top:347.00px;font-size:8px;line-height:8px;color:#7b7f85;font-weight:400;left:736.60px;font-family:&quot;DejaVu Sans&quot;,sans-serif;transform:scaleX(1.25);transform-origin:0 0;-webkit-text-stroke:0;">↳</span>
<span class="t n" style="top:346.00px;font-size:7.8px;line-height:7.8px;color:#2c3338;font-weight:400;letter-spacing:-0.013px;left:746.10px;-webkit-text-stroke:0;">A-S2 (OSL-NO-A-S2)</span>
<span class="t n" style="top:345.00px;font-size:7.8px;line-height:7.8px;color:#50575e;font-weight:400;left:864.50px;">×</span>
<svg class="i" style="left:872.00px;top:347.14px" width="6.10" height="3.80" viewBox="0 0 12 7" preserveAspectRatio="none" ><path fill="none" stroke="#454c53" stroke-width="2.05" stroke-linecap="round" stroke-linejoin="round" d="M1.200 1.200 6 5.800l4.800-4.600"/></svg>
<div class="b" style="left:9.00px;top:367.72px;width:880.00px;height:31.88px;background:#f6f7f7;"></div>
<div class="b" style="left:14.20px;top:374.02px;width:10.00px;height:9.20px;background:#fff;border:1px solid #c0c2c5;border-radius:2.3px;"></div>
<span class="t" style="top:375.00px;font-size:7.8px;line-height:7.8px;color:#2271b1;font-weight:700;letter-spacing:-0.371px;left:41.90px;">Cap</span>
<span class="t" style="top:387.00px;font-size:6.7px;line-height:6.7px;color:#50575e;font-weight:400;letter-spacing:0.030px;left:41.90px;">Changed: 2025-12-02 10:39</span>
<span class="t n" style="top:375.00px;font-size:7.7px;line-height:7.7px;color:#2c3338;font-weight:400;letter-spacing:-0.304px;left:157.50px;">$17,00</span>
<div class="b" style="left:203.20px;top:371.92px;width:63.50px;height:17.50px;background:#fff;border:1px solid #c3c5c8;border-radius:2.5px;"></div>
<span class="t n" style="top:377.00px;font-size:8.6px;line-height:8.6px;color:#2c3338;font-weight:400;right:641.80px;">9</span>
<div class="b" style="left:278.20px;top:372.22px;width:56.40px;height:17.00px;background:#fffff0;border:1px solid #e2e3e0;border-radius:2.5px;"></div>
<span class="t n" style="top:377.00px;font-size:8.6px;line-height:8.6px;color:#8c8f94;font-weight:400;right:574.00px;">49</span>
<div class="b" style="left:337.30px;top:373.62px;width:14.80px;height:14.60px;background:#ececee;border:1px solid #dddee0;border-radius:2.5px;"></div>
<svg class="i" style="left:341.00px;top:377.62px" width="7.30" height="6.90" viewBox="0 0 576 512" preserveAspectRatio="none" ><path fill="#2271b1" d="M402.600 83.200l90.200 90.200c3.800 3.800 3.800 10 0 13.800L274.400 405.600l-92.800 10.300c-12.400 1.400-22.900-9.100-21.500-21.500l10.300-92.800L388.800 83.200c3.800-3.800 10-3.800 13.800 0zm162-22.900l-48.800-48.800c-15.200-15.200-39.900-15.200-55.200 0l-35.400 35.400c-3.800 3.800-3.800 10 0 13.800l90.200 90.200c3.800 3.800 10 3.800 13.800 0l35.400-35.400c15.200-15.300 15.200-40 0-55.200zM384 346.200V448H64V128h229.800c3.200 0 6.200-1.300 8.500-3.500l40-40c7.600-7.600 2.200-20.500-8.500-20.500H48C21.500 64 0 85.500 0 112v352c0 26.500 21.500 48 48 48h352c26.500 0 48-21.500 48-48V306.200c0-10.700-12.900-16-20.500-8.500l-40 40c-2.200 2.300-3.500 5.300-3.500 8.500z"/></svg>
<span class="t" style="top:378.00px;font-size:7.2px;line-height:7.2px;color:#3c434a;font-weight:700;left:383.05px;transform:translateX(-50%);">35</span>
<svg class="i" style="left:397.30px;top:377.67px" width="8.60" height="6.70" viewBox="0 64 512 384" preserveAspectRatio="none" ><path fill="#2271b1" d="M416 448h-84c-6.600 0-12-5.400-12-12v-40c0-6.600 5.400-12 12-12h84c17.700 0 32-14.300 32-32V160c0-17.700-14.300-32-32-32h-84c-6.600 0-12-5.400-12-12V76c0-6.600 5.400-12 12-12h84c53 0 96 43 96 96v192c0 53-43 96-96 96zm-47-201L201 79c-15-15-41-4.500-41 17v96H24c-13.300 0-24 10.700-24 24v96c0 13.300 10.700 24 24 24h136v96c0 21.500 26 32 41 17l168-168c9.300-9.400 9.300-24.600 0-34z"/></svg>
<div class="b" style="left:409.20px;top:371.92px;width:43.50px;height:17.50px;background:#fff;border:1px solid #c3c5c8;border-radius:2.5px;"></div>
<span class="t n" style="top:378.00px;font-size:7.6px;line-height:7.6px;color:#3c434a;font-weight:400;right:455.90px;">0</span>
<div class="b" style="left:474.00px;top:371.92px;width:112.60px;height:17.40px;background:#fff;border:1px solid #c3c5c8;border-radius:2.5px;"></div>
<span class="t n" style="top:377.00px;font-size:8.4px;line-height:8.4px;color:#2c3338;font-weight:400;letter-spacing:-0.120px;left:478.85px;">Select reason...</span>
<svg class="i" style="left:575.50px;top:379.02px" width="6.10" height="3.80" viewBox="0 0 12 7" preserveAspectRatio="none" ><path fill="none" stroke="#454c53" stroke-width="2.05" stroke-linecap="round" stroke-linejoin="round" d="M1.200 1.200 6 5.800l4.800-4.600"/></svg>
<div class="b" style="left:597.90px;top:372.22px;width:119.90px;height:17.10px;background:#fff;border:1px solid #c3c5c8;border-radius:2.5px;"></div>
<span class="t n" style="top:377.00px;font-size:8.4px;line-height:8.4px;color:#70757c;font-weight:400;letter-spacing:-0.028px;left:602.50px;">Optional note</span>
<div class="b" style="left:728.20px;top:371.82px;width:155.50px;height:17.50px;background:#fff;border:1px solid #c8ccd4;border-radius:3px;"></div>
<span class="t n" style="top:379.00px;font-size:8px;line-height:8px;color:#7b7f85;font-weight:400;left:736.60px;font-family:&quot;DejaVu Sans&quot;,sans-serif;transform:scaleX(1.25);transform-origin:0 0;-webkit-text-stroke:0;">↳</span>
<span class="t n" style="top:378.00px;font-size:7.8px;line-height:7.8px;color:#2c3338;font-weight:400;letter-spacing:-0.013px;left:746.10px;-webkit-text-stroke:0;">A-S2 (OSL-NO-A-S2)</span>
<span class="t n" style="top:377.00px;font-size:7.8px;line-height:7.8px;color:#50575e;font-weight:400;left:864.50px;">×</span>
<svg class="i" style="left:872.00px;top:379.02px" width="6.10" height="3.80" viewBox="0 0 12 7" preserveAspectRatio="none" ><path fill="none" stroke="#454c53" stroke-width="2.05" stroke-linecap="round" stroke-linejoin="round" d="M1.200 1.200 6 5.800l4.800-4.600"/></svg>
<div class="b" style="left:14.20px;top:405.90px;width:10.00px;height:9.20px;background:#fff;border:1px solid #c0c2c5;border-radius:2.3px;"></div>
<span class="t" style="top:407.00px;font-size:7.8px;line-height:7.8px;color:#2271b1;font-weight:700;letter-spacing:-0.057px;left:41.90px;">Levis T-shirt</span>
<span class="t" style="top:419.00px;font-size:6.7px;line-height:6.7px;color:#50575e;font-weight:400;letter-spacing:0.030px;left:41.90px;">Changed: 2025-12-02 10:39</span>
<span class="t n" style="top:407.00px;font-size:7.7px;line-height:7.7px;color:#2c3338;font-weight:400;letter-spacing:-0.105px;left:157.50px;">$14,00</span>
<div class="b" style="left:203.20px;top:403.80px;width:63.50px;height:17.50px;background:#fff;border:1px solid #c3c5c8;border-radius:2.5px;"></div>
<span class="t n" style="top:409.00px;font-size:8.6px;line-height:8.6px;color:#2c3338;font-weight:400;right:641.80px;">0</span>
<div class="b" style="left:278.20px;top:404.10px;width:56.40px;height:17.00px;background:#fffff0;border:1px solid #e2e3e0;border-radius:2.5px;"></div>
<span class="t n" style="top:409.00px;font-size:8.6px;line-height:8.6px;color:#8c8f94;font-weight:400;right:574.00px;">0</span>
<div class="b" style="left:337.30px;top:405.50px;width:14.80px;height:14.60px;background:#ececee;border:1px solid #dddee0;border-radius:2.5px;"></div>
<svg class="i" style="left:341.00px;top:409.50px" width="7.30" height="6.90" viewBox="0 0 576 512" preserveAspectRatio="none" ><path fill="#2271b1" d="M402.600 83.200l90.200 90.200c3.800 3.800 3.800 10 0 13.800L274.400 405.600l-92.800 10.300c-12.400 1.400-22.900-9.100-21.500-21.500l10.300-92.800L388.800 83.200c3.800-3.800 10-3.800 13.800 0zm162-22.900l-48.800-48.800c-15.200-15.200-39.900-15.200-55.200 0l-35.400 35.400c-3.800 3.800-3.800 10 0 13.800l90.200 90.200c3.800 3.800 10 3.800 13.800 0l35.400-35.400c15.200-15.300 15.200-40 0-55.200zM384 346.200V448H64V128h229.800c3.200 0 6.200-1.300 8.500-3.500l40-40c7.600-7.600 2.200-20.500-8.500-20.500H48C21.500 64 0 85.500 0 112v352c0 26.500 21.500 48 48 48h352c26.500 0 48-21.500 48-48V306.200c0-10.700-12.900-16-20.500-8.500l-40 40c-2.200 2.300-3.500 5.300-3.500 8.500z"/></svg>
<div class="b" style="left:372.30px;top:406.10px;width:21.50px;height:13.60px;background:#f3f4f5;border-radius:2px;"></div>
<span class="t" style="top:410.00px;font-size:7.2px;line-height:7.2px;color:#3c434a;font-weight:700;left:383.05px;transform:translateX(-50%);">0</span>
<svg class="i" style="left:397.30px;top:409.55px" width="8.60" height="6.70" viewBox="0 64 512 384" preserveAspectRatio="none" ><path fill="#a3c3df" d="M416 448h-84c-6.600 0-12-5.400-12-12v-40c0-6.600 5.400-12 12-12h84c17.700 0 32-14.300 32-32V160c0-17.700-14.300-32-32-32h-84c-6.600 0-12-5.400-12-12V76c0-6.600 5.400-12 12-12h84c53 0 96 43 96 96v192c0 53-43 96-96 96zm-47-201L201 79c-15-15-41-4.500-41 17v96H24c-13.300 0-24 10.700-24 24v96c0 13.300 10.700 24 24 24h136v96c0 21.500 26 32 41 17l168-168c9.300-9.400 9.300-24.600 0-34z"/></svg>
<div class="b" style="left:409.20px;top:403.80px;width:43.50px;height:17.50px;background:#fff;border:1px solid #c3c5c8;border-radius:2.5px;"></div>
<span class="t n" style="top:410.00px;font-size:7.6px;line-height:7.6px;color:#3c434a;font-weight:400;right:455.90px;">0</span>
<div class="b" style="left:474.00px;top:403.80px;width:112.60px;height:17.40px;background:#fff;border:1px solid #c3c5c8;border-radius:2.5px;"></div>
<span class="t n" style="top:409.00px;font-size:8.4px;line-height:8.4px;color:#2c3338;font-weight:400;letter-spacing:-0.120px;left:478.85px;">Select reason...</span>
<svg class="i" style="left:575.50px;top:410.90px" width="6.10" height="3.80" viewBox="0 0 12 7" preserveAspectRatio="none" ><path fill="none" stroke="#454c53" stroke-width="2.05" stroke-linecap="round" stroke-linejoin="round" d="M1.200 1.200 6 5.800l4.800-4.600"/></svg>
<div class="b" style="left:597.90px;top:404.10px;width:119.90px;height:17.10px;background:#fff;border:1px solid #c3c5c8;border-radius:2.5px;"></div>
<span class="t n" style="top:409.00px;font-size:8.4px;line-height:8.4px;color:#70757c;font-weight:400;letter-spacing:-0.028px;left:602.50px;">Optional note</span>
<div class="b" style="left:728.20px;top:403.70px;width:155.50px;height:17.50px;background:#fff;border:1px solid #c8ccd4;border-radius:3px;"></div>
<span class="t n" style="top:411.00px;font-size:8px;line-height:8px;color:#7b7f85;font-weight:400;left:736.60px;font-family:&quot;DejaVu Sans&quot;,sans-serif;transform:scaleX(1.25);transform-origin:0 0;-webkit-text-stroke:0;">↳</span>
<span class="t n" style="top:410.00px;font-size:7.8px;line-height:7.8px;color:#2c3338;font-weight:400;letter-spacing:-0.067px;left:746.10px;-webkit-text-stroke:0;">A-S7 (OSL-NO-OSL-A-S7)</span>
<span class="t n" style="top:409.00px;font-size:7.8px;line-height:7.8px;color:#50575e;font-weight:400;left:864.50px;">×</span>
<svg class="i" style="left:872.00px;top:410.90px" width="6.10" height="3.80" viewBox="0 0 12 7" preserveAspectRatio="none" ><path fill="none" stroke="#454c53" stroke-width="2.05" stroke-linecap="round" stroke-linejoin="round" d="M1.200 1.200 6 5.800l4.800-4.600"/></svg>
<div class="b" style="left:9.00px;top:431.48px;width:880.00px;height:31.88px;background:#f6f7f7;"></div>
<div class="b" style="left:14.20px;top:437.78px;width:10.00px;height:9.20px;background:#fff;border:1px solid #c0c2c5;border-radius:2.3px;"></div>
<span class="t" style="top:438.00px;font-size:7.8px;line-height:7.8px;color:#2271b1;font-weight:700;letter-spacing:-0.099px;left:42.00px;"><span style="color:#72aee6;font-size:9.5px;line-height:0;position:relative;top:0.8px">»</span> Levis T-shirt</span>
<span class="t" style="top:451.00px;font-size:6.7px;line-height:6.7px;color:#50575e;font-weight:400;letter-spacing:0.030px;left:41.90px;">Changed: 2025-12-02 10:39</span>
<span class="t n" style="top:438.00px;font-size:7.7px;line-height:7.7px;color:#2c3338;font-weight:400;letter-spacing:-0.105px;left:157.50px;">$14,00</span>
<div class="b" style="left:203.20px;top:435.68px;width:63.50px;height:17.50px;background:#fff;border:1px solid #c3c5c8;border-radius:2.5px;"></div>
<span class="t n" style="top:441.00px;font-size:8.6px;line-height:8.6px;color:#2c3338;font-weight:400;right:641.80px;">20</span>
<div class="b" style="left:278.20px;top:435.98px;width:56.40px;height:17.00px;background:#fffff0;border:1px solid #e2e3e0;border-radius:2.5px;"></div>
<span class="t n" style="top:441.00px;font-size:8.6px;line-height:8.6px;color:#8c8f94;font-weight:400;right:574.00px;">53</span>
<div class="b" style="left:337.30px;top:437.38px;width:14.80px;height:14.60px;background:#ececee;border:1px solid #dddee0;border-radius:2.5px;"></div>
<svg class="i" style="left:341.00px;top:441.38px" width="7.30" height="6.90" viewBox="0 0 576 512" preserveAspectRatio="none" ><path fill="#2271b1" d="M402.600 83.200l90.200 90.200c3.800 3.800 3.800 10 0 13.800L274.400 405.600l-92.800 10.300c-12.400 1.400-22.900-9.100-21.500-21.500l10.300-92.800L388.800 83.200c3.800-3.800 10-3.800 13.800 0zm162-22.900l-48.800-48.800c-15.200-15.200-39.900-15.200-55.200 0l-35.400 35.400c-3.800 3.800-3.800 10 0 13.800l90.200 90.200c3.800 3.800 10 3.800 13.800 0l35.400-35.400c15.200-15.300 15.200-40 0-55.200zM384 346.200V448H64V128h229.800c3.200 0 6.200-1.300 8.500-3.500l40-40c7.600-7.600 2.200-20.500-8.500-20.500H48C21.500 64 0 85.500 0 112v352c0 26.500 21.500 48 48 48h352c26.500 0 48-21.500 48-48V306.200c0-10.700-12.900-16-20.500-8.500l-40 40c-2.200 2.300-3.500 5.300-3.500 8.500z"/></svg>
<span class="t" style="top:441.00px;font-size:7.2px;line-height:7.2px;color:#3c434a;font-weight:700;left:383.05px;transform:translateX(-50%);">28</span>
<svg class="i" style="left:397.30px;top:441.43px" width="8.60" height="6.70" viewBox="0 64 512 384" preserveAspectRatio="none" ><path fill="#2271b1" d="M416 448h-84c-6.600 0-12-5.400-12-12v-40c0-6.600 5.400-12 12-12h84c17.700 0 32-14.300 32-32V160c0-17.700-14.300-32-32-32h-84c-6.600 0-12-5.400-12-12V76c0-6.600 5.400-12 12-12h84c53 0 96 43 96 96v192c0 53-43 96-96 96zm-47-201L201 79c-15-15-41-4.500-41 17v96H24c-13.300 0-24 10.700-24 24v96c0 13.300 10.700 24 24 24h136v96c0 21.500 26 32 41 17l168-168c9.300-9.400 9.300-24.600 0-34z"/></svg>
<div class="b" style="left:409.20px;top:435.68px;width:43.50px;height:17.50px;background:#fff;border:1px solid #c3c5c8;border-radius:2.5px;"></div>
<span class="t n" style="top:442.00px;font-size:7.6px;line-height:7.6px;color:#3c434a;font-weight:400;right:455.90px;">0</span>
<div class="b" style="left:474.00px;top:435.68px;width:112.60px;height:17.40px;background:#fff;border:1px solid #c3c5c8;border-radius:2.5px;"></div>
<span class="t n" style="top:441.00px;font-size:8.4px;line-height:8.4px;color:#2c3338;font-weight:400;letter-spacing:-0.120px;left:478.85px;">Select reason...</span>
<svg class="i" style="left:575.50px;top:442.78px" width="6.10" height="3.80" viewBox="0 0 12 7" preserveAspectRatio="none" ><path fill="none" stroke="#454c53" stroke-width="2.05" stroke-linecap="round" stroke-linejoin="round" d="M1.200 1.200 6 5.800l4.800-4.600"/></svg>
<div class="b" style="left:597.90px;top:435.98px;width:119.90px;height:17.10px;background:#fff;border:1px solid #c3c5c8;border-radius:2.5px;"></div>
<span class="t n" style="top:441.00px;font-size:8.4px;line-height:8.4px;color:#70757c;font-weight:400;letter-spacing:-0.028px;left:602.50px;">Optional note</span>
<div class="b" style="left:728.20px;top:435.58px;width:155.50px;height:17.50px;background:#fff;border:1px solid #c8ccd4;border-radius:3px;"></div>
<span class="t n" style="top:442.00px;font-size:8px;line-height:8px;color:#7b7f85;font-weight:400;left:736.60px;font-family:&quot;DejaVu Sans&quot;,sans-serif;transform:scaleX(1.25);transform-origin:0 0;-webkit-text-stroke:0;">↳</span>
<span class="t n" style="top:441.00px;font-size:7.8px;line-height:7.8px;color:#2c3338;font-weight:400;letter-spacing:-0.137px;left:746.10px;-webkit-text-stroke:0;">A-S1 (NO-OSL-A-S1)</span>
<span class="t n" style="top:441.00px;font-size:7.8px;line-height:7.8px;color:#50575e;font-weight:400;left:864.50px;">×</span>
<svg class="i" style="left:872.00px;top:442.78px" width="6.10" height="3.80" viewBox="0 0 12 7" preserveAspectRatio="none" ><path fill="none" stroke="#454c53" stroke-width="2.05" stroke-linecap="round" stroke-linejoin="round" d="M1.200 1.200 6 5.800l4.800-4.600"/></svg>
<div class="b" style="left:14.20px;top:469.66px;width:10.00px;height:9.20px;background:#fff;border:1px solid #c0c2c5;border-radius:2.3px;"></div>
<span class="t" style="top:470.00px;font-size:7.8px;line-height:7.8px;color:#2271b1;font-weight:700;letter-spacing:-0.099px;left:42.00px;"><span style="color:#72aee6;font-size:9.5px;line-height:0;position:relative;top:0.8px">»</span> Levis T-shirt</span>
<span class="t" style="top:483.00px;font-size:6.7px;line-height:6.7px;color:#50575e;font-weight:400;letter-spacing:0.030px;left:41.90px;">Changed: 2025-12-02 10:39</span>
<span class="t n" style="top:470.00px;font-size:7.7px;line-height:7.7px;color:#2c3338;font-weight:400;letter-spacing:-0.105px;left:157.50px;">$14,00</span>
<div class="b" style="left:203.20px;top:467.56px;width:63.50px;height:17.50px;background:#fff;border:1px solid #c3c5c8;border-radius:2.5px;"></div>
<span class="t n" style="top:473.00px;font-size:8.6px;line-height:8.6px;color:#2c3338;font-weight:400;right:641.80px;">20</span>
<div class="b" style="left:278.20px;top:467.86px;width:56.40px;height:17.00px;background:#fffff0;border:1px solid #e2e3e0;border-radius:2.5px;"></div>
<span class="t n" style="top:473.00px;font-size:8.6px;line-height:8.6px;color:#8c8f94;font-weight:400;right:574.00px;">45</span>
<div class="b" style="left:337.30px;top:469.26px;width:14.80px;height:14.60px;background:#ececee;border:1px solid #dddee0;border-radius:2.5px;"></div>
<svg class="i" style="left:341.00px;top:473.26px" width="7.30" height="6.90" viewBox="0 0 576 512" preserveAspectRatio="none" ><path fill="#2271b1" d="M402.600 83.200l90.200 90.200c3.800 3.800 3.800 10 0 13.800L274.400 405.600l-92.800 10.300c-12.400 1.400-22.900-9.100-21.500-21.500l10.300-92.800L388.800 83.200c3.800-3.800 10-3.800 13.800 0zm162-22.900l-48.800-48.800c-15.200-15.200-39.900-15.200-55.200 0l-35.400 35.400c-3.800 3.800-3.800 10 0 13.800l90.200 90.200c3.800 3.800 10 3.800 13.800 0l35.400-35.400c15.200-15.300 15.200-40 0-55.200zM384 346.200V448H64V128h229.800c3.200 0 6.200-1.300 8.500-3.500l40-40c7.600-7.600 2.200-20.500-8.500-20.500H48C21.500 64 0 85.500 0 112v352c0 26.500 21.500 48 48 48h352c26.500 0 48-21.500 48-48V306.200c0-10.700-12.900-16-20.500-8.500l-40 40c-2.200 2.300-3.500 5.300-3.500 8.500z"/></svg>
<div class="b" style="left:372.30px;top:469.86px;width:21.50px;height:13.60px;background:#f3f4f5;border-radius:2px;"></div>
<span class="t" style="top:473.00px;font-size:7.2px;line-height:7.2px;color:#3c434a;font-weight:700;left:383.05px;transform:translateX(-50%);">15</span>
<svg class="i" style="left:397.30px;top:473.31px" width="8.60" height="6.70" viewBox="0 64 512 384" preserveAspectRatio="none" ><path fill="#2271b1" d="M416 448h-84c-6.600 0-12-5.400-12-12v-40c0-6.600 5.400-12 12-12h84c17.700 0 32-14.300 32-32V160c0-17.700-14.300-32-32-32h-84c-6.600 0-12-5.400-12-12V76c0-6.600 5.400-12 12-12h84c53 0 96 43 96 96v192c0 53-43 96-96 96zm-47-201L201 79c-15-15-41-4.500-41 17v96H24c-13.300 0-24 10.700-24 24v96c0 13.300 10.700 24 24 24h136v96c0 21.500 26 32 41 17l168-168c9.300-9.400 9.300-24.600 0-34z"/></svg>
<div class="b" style="left:409.20px;top:467.56px;width:43.50px;height:17.50px;background:#fff;border:1px solid #c3c5c8;border-radius:2.5px;"></div>
<span class="t n" style="top:473.00px;font-size:7.6px;line-height:7.6px;color:#3c434a;font-weight:400;right:455.90px;">0</span>
<div class="b" style="left:474.00px;top:467.56px;width:112.60px;height:17.40px;background:#fff;border:1px solid #c3c5c8;border-radius:2.5px;"></div>
<span class="t n" style="top:473.00px;font-size:8.4px;line-height:8.4px;color:#2c3338;font-weight:400;letter-spacing:-0.120px;left:478.85px;">Select reason...</span>
<svg class="i" style="left:575.50px;top:474.66px" width="6.10" height="3.80" viewBox="0 0 12 7" preserveAspectRatio="none" ><path fill="none" stroke="#454c53" stroke-width="2.05" stroke-linecap="round" stroke-linejoin="round" d="M1.200 1.200 6 5.800l4.800-4.600"/></svg>
<div class="b" style="left:597.90px;top:467.86px;width:119.90px;height:17.10px;background:#fff;border:1px solid #c3c5c8;border-radius:2.5px;"></div>
<span class="t n" style="top:473.00px;font-size:8.4px;line-height:8.4px;color:#70757c;font-weight:400;letter-spacing:-0.028px;left:602.50px;">Optional note</span>
<div class="b" style="left:728.20px;top:467.46px;width:155.50px;height:17.50px;background:#fff;border:1px solid #c8ccd4;border-radius:3px;"></div>
<span class="t n" style="top:474.00px;font-size:8px;line-height:8px;color:#7b7f85;font-weight:400;left:736.60px;font-family:&quot;DejaVu Sans&quot;,sans-serif;transform:scaleX(1.25);transform-origin:0 0;-webkit-text-stroke:0;">↳</span>
<span class="t n" style="top:473.00px;font-size:7.8px;line-height:7.8px;color:#2c3338;font-weight:400;letter-spacing:-0.137px;left:746.10px;-webkit-text-stroke:0;">A-S1 (NO-OSL-A-S1)</span>
<span class="t n" style="top:473.00px;font-size:7.8px;line-height:7.8px;color:#50575e;font-weight:400;left:864.50px;">×</span>
<svg class="i" style="left:872.00px;top:474.66px" width="6.10" height="3.80" viewBox="0 0 12 7" preserveAspectRatio="none" ><path fill="none" stroke="#454c53" stroke-width="2.05" stroke-linecap="round" stroke-linejoin="round" d="M1.200 1.200 6 5.800l4.800-4.600"/></svg>
<div class="b" style="left:9.00px;top:495.24px;width:880.00px;height:31.88px;background:#f6f7f7;"></div>
<div class="b" style="left:14.20px;top:501.54px;width:10.00px;height:9.20px;background:#fff;border:1px solid #c0c2c5;border-radius:2.3px;"></div>
<span class="t" style="top:502.00px;font-size:7.8px;line-height:7.8px;color:#2271b1;font-weight:700;letter-spacing:-0.081px;left:42.00px;"><span style="color:#72aee6;font-size:9.5px;line-height:0;position:relative;top:0.8px">»</span> Levis T-shirt - Blue</span>
<span class="t" style="top:515.00px;font-size:6.7px;line-height:6.7px;color:#50575e;font-weight:400;letter-spacing:0.030px;left:41.90px;">Changed: 2025-12-02 10:39</span>
<span class="t n" style="top:502.00px;font-size:7.7px;line-height:7.7px;color:#2c3338;font-weight:400;letter-spacing:-0.105px;left:157.50px;">$14,00</span>
<div class="b" style="left:203.20px;top:499.44px;width:63.50px;height:17.50px;background:#fff;border:1px solid #c3c5c8;border-radius:2.5px;"></div>
<span class="t n" style="top:504.00px;font-size:8.6px;line-height:8.6px;color:#2c3338;font-weight:400;right:641.80px;">20</span>
<div class="b" style="left:278.20px;top:499.74px;width:56.40px;height:17.00px;background:#fffff0;border:1px solid #e2e3e0;border-radius:2.5px;"></div>
<span class="t n" style="top:504.00px;font-size:8.6px;line-height:8.6px;color:#8c8f94;font-weight:400;right:574.00px;">25</span>
<div class="b" style="left:337.30px;top:501.14px;width:14.80px;height:14.60px;background:#ececee;border:1px solid #dddee0;border-radius:2.5px;"></div>
<svg class="i" style="left:341.00px;top:505.14px" width="7.30" height="6.90" viewBox="0 0 576 512" preserveAspectRatio="none" ><path fill="#2271b1" d="M402.600 83.200l90.200 90.200c3.800 3.800 3.800 10 0 13.800L274.400 405.600l-92.800 10.300c-12.400 1.400-22.900-9.100-21.500-21.500l10.300-92.800L388.800 83.200c3.800-3.800 10-3.800 13.800 0zm162-22.900l-48.800-48.800c-15.200-15.200-39.900-15.200-55.200 0l-35.400 35.400c-3.800 3.800-3.800 10 0 13.800l90.200 90.200c3.800 3.800 10 3.800 13.800 0l35.400-35.400c15.200-15.300 15.200-40 0-55.200zM384 346.200V448H64V128h229.800c3.200 0 6.200-1.300 8.500-3.500l40-40c7.600-7.600 2.200-20.500-8.500-20.500H48C21.500 64 0 85.500 0 112v352c0 26.500 21.500 48 48 48h352c26.500 0 48-21.500 48-48V306.200c0-10.700-12.900-16-20.500-8.500l-40 40c-2.200 2.300-3.500 5.300-3.500 8.500z"/></svg>
<span class="t" style="top:505.00px;font-size:7.2px;line-height:7.2px;color:#3c434a;font-weight:700;left:383.05px;transform:translateX(-50%);">0</span>
<svg class="i" style="left:397.30px;top:505.19px" width="8.60" height="6.70" viewBox="0 64 512 384" preserveAspectRatio="none" ><path fill="#a3c3df" d="M416 448h-84c-6.600 0-12-5.400-12-12v-40c0-6.600 5.400-12 12-12h84c17.700 0 32-14.300 32-32V160c0-17.700-14.300-32-32-32h-84c-6.600 0-12-5.400-12-12V76c0-6.600 5.400-12 12-12h84c53 0 96 43 96 96v192c0 53-43 96-96 96zm-47-201L201 79c-15-15-41-4.500-41 17v96H24c-13.300 0-24 10.700-24 24v96c0 13.300 10.700 24 24 24h136v96c0 21.500 26 32 41 17l168-168c9.300-9.400 9.300-24.600 0-34z"/></svg>
<div class="b" style="left:409.20px;top:499.44px;width:43.50px;height:17.50px;background:#fff;border:1px solid #c3c5c8;border-radius:2.5px;"></div>
<span class="t n" style="top:505.00px;font-size:7.6px;line-height:7.6px;color:#3c434a;font-weight:400;right:455.90px;">0</span>
<div class="b" style="left:474.00px;top:499.44px;width:112.60px;height:17.40px;background:#fff;border:1px solid #c3c5c8;border-radius:2.5px;"></div>
<span class="t n" style="top:504.00px;font-size:8.4px;line-height:8.4px;color:#2c3338;font-weight:400;letter-spacing:-0.120px;left:478.85px;">Select reason...</span>
<svg class="i" style="left:575.50px;top:506.54px" width="6.10" height="3.80" viewBox="0 0 12 7" preserveAspectRatio="none" ><path fill="none" stroke="#454c53" stroke-width="2.05" stroke-linecap="round" stroke-linejoin="round" d="M1.200 1.200 6 5.800l4.800-4.600"/></svg>
<div class="b" style="left:597.90px;top:499.74px;width:119.90px;height:17.10px;background:#fff;border:1px solid #c3c5c8;border-radius:2.5px;"></div>
<span class="t n" style="top:504.00px;font-size:8.4px;line-height:8.4px;color:#70757c;font-weight:400;letter-spacing:-0.028px;left:602.50px;">Optional note</span>
<div class="b" style="left:728.20px;top:499.34px;width:155.50px;height:17.50px;background:#fff;border:1px solid #c8ccd4;border-radius:3px;"></div>
<span class="t n" style="top:506.00px;font-size:8px;line-height:8px;color:#7b7f85;font-weight:400;left:736.60px;font-family:&quot;DejaVu Sans&quot;,sans-serif;transform:scaleX(1.25);transform-origin:0 0;-webkit-text-stroke:0;">↳</span>
<span class="t n" style="top:505.00px;font-size:7.8px;line-height:7.8px;color:#2c3338;font-weight:400;letter-spacing:-0.137px;left:746.10px;-webkit-text-stroke:0;">A-S1 (NO-OSL-A-S1)</span>
<span class="t n" style="top:505.00px;font-size:7.8px;line-height:7.8px;color:#50575e;font-weight:400;left:864.50px;">×</span>
<svg class="i" style="left:872.00px;top:506.54px" width="6.10" height="3.80" viewBox="0 0 12 7" preserveAspectRatio="none" ><path fill="none" stroke="#454c53" stroke-width="2.05" stroke-linecap="round" stroke-linejoin="round" d="M1.200 1.200 6 5.800l4.800-4.600"/></svg>
</div></body></html>
